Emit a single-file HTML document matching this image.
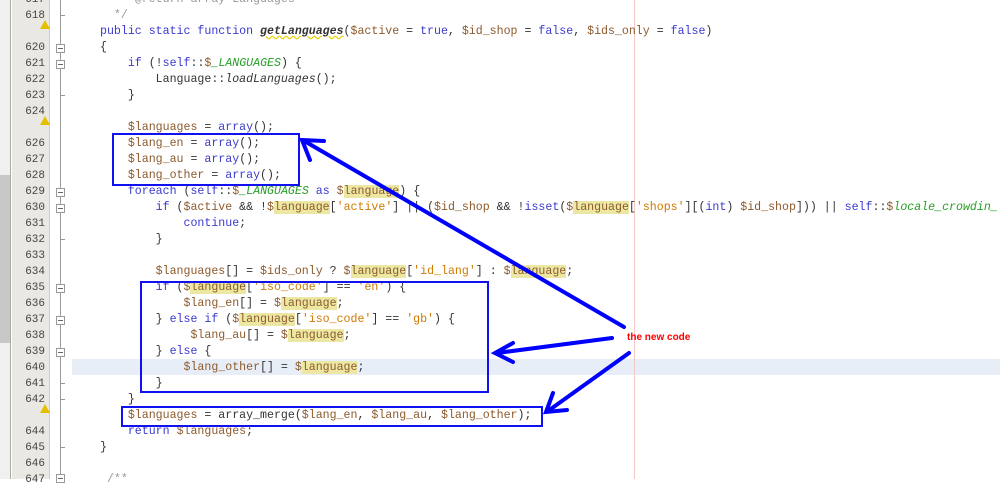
<!DOCTYPE html>
<html><head><meta charset="utf-8"><style>
*{margin:0;padding:0}
body{width:1000px;height:479px;overflow:hidden;background:#fff;position:relative;font-family:"Liberation Mono",monospace;font-size:11.6px}
.l{position:absolute;left:100px;height:16px;line-height:16px;white-space:pre;color:#333}
.n{position:absolute;left:12px;width:33px;text-align:right;height:16px;line-height:16px;color:#444;font-size:11px}
.k{color:#3a3ad0}.v{color:#8c5a2c}.s{color:#d07a00}.g{color:#27a027;font-style:italic}.c{color:#999}
.h{background:#ece8a4}
.f{position:absolute;left:56px;width:7px;height:7px;border:1px solid #999;background:#fff}
.f:after{content:"";position:absolute;left:1px;top:3px;width:5px;height:1px;background:#666}
.t{position:absolute;left:61px;width:4px;height:1px;background:#999}
.w{position:absolute;left:40px;width:0;height:0;border-left:5px solid transparent;border-right:5px solid transparent;border-bottom:9px solid #e6c000}
.box{position:absolute;border:2px solid #1010f0}
</style></head><body>
<div style="position:absolute;left:0;top:0;width:11px;height:479px;background:#f0f0f0"></div>
<div style="position:absolute;left:0;top:175px;width:10px;height:168px;background:#c8c8c8"></div>
<div style="position:absolute;left:10px;top:0;width:1px;height:479px;background:#aaa"></div>
<div style="position:absolute;left:12px;top:0;width:37px;height:479px;background:#eae8e2"></div>
<div style="position:absolute;left:49px;top:0;width:1px;height:479px;background:#ccc"></div>
<div style="position:absolute;left:60px;top:0;width:1px;height:479px;background:#999"></div>
<div style="position:absolute;left:72px;top:359px;width:928px;height:16px;background:#e8eef8"></div>
<div style="position:absolute;left:634px;top:0;width:1px;height:479px;background:#f5c8c8"></div>

<div class="n" style="top:-8px">617</div><div class="n" style="top:8px">618</div>
<div class="w" style="top:20px"></div>
<div class="n" style="top:40px">620</div><div class="n" style="top:56px">621</div><div class="n" style="top:72px">622</div><div class="n" style="top:88px">623</div><div class="n" style="top:104px">624</div>
<div class="w" style="top:116px"></div>
<div class="n" style="top:136px">626</div><div class="n" style="top:152px">627</div><div class="n" style="top:168px">628</div><div class="n" style="top:184px">629</div><div class="n" style="top:200px">630</div><div class="n" style="top:216px">631</div><div class="n" style="top:232px">632</div><div class="n" style="top:248px">633</div><div class="n" style="top:264px">634</div><div class="n" style="top:280px">635</div><div class="n" style="top:296px">636</div><div class="n" style="top:312px">637</div><div class="n" style="top:328px">638</div><div class="n" style="top:344px">639</div><div class="n" style="top:360px">640</div><div class="n" style="top:376px">641</div><div class="n" style="top:392px">642</div>
<div class="w" style="top:404px"></div>
<div class="n" style="top:424px">644</div><div class="n" style="top:440px">645</div><div class="n" style="top:456px">646</div><div class="n" style="top:472px">647</div>

<div class="f" style="top:44px"></div><div class="f" style="top:60px"></div><div class="f" style="top:188px"></div><div class="f" style="top:204px"></div><div class="f" style="top:284px"></div><div class="f" style="top:316px"></div><div class="f" style="top:348px"></div><div class="f" style="top:474px"></div>
<div class="t" style="top:15px"></div><div class="t" style="top:95px"></div><div class="t" style="top:239px"></div><div class="t" style="top:383px"></div><div class="t" style="top:399px"></div><div class="t" style="top:447px"></div>

<div class="l c" style="top:-8px">   * @return array Languages</div>
<div class="l c" style="top:8px">  */</div>
<div class="l" style="top:24px"><span class="k">public static function</span> <b><i style="text-decoration:underline wavy #e6d000">getLanguages</i></b>(<span class="v">$active</span> = <span class="k">true</span>, <span class="v">$id_shop</span> = <span class="k">false</span>, <span class="v">$ids_only</span> = <span class="k">false</span>)</div>
<div class="l" style="top:40px">{</div>
<div class="l" style="top:56px">    <span class="k">if</span> (!<span class="k">self</span>::<span class="v">$</span><span class="g">_LANGUAGES</span>) {</div>
<div class="l" style="top:72px">        Language::<i>loadLanguages</i>();</div>
<div class="l" style="top:88px">    }</div>
<div class="l" style="top:120px">    <span class="v">$languages</span> = <span class="k">array</span>();</div>
<div class="l" style="top:136px">    <span class="v">$lang_en</span> = <span class="k">array</span>();</div>
<div class="l" style="top:152px">    <span class="v">$lang_au</span> = <span class="k">array</span>();</div>
<div class="l" style="top:168px">    <span class="v">$lang_other</span> = <span class="k">array</span>();</div>
<div class="l" style="top:184px">    <span class="k">foreach</span> (<span class="k">self</span>::<span class="v">$</span><span class="g">_LANGUAGES</span> <span class="k">as</span> <span class="v">$<span class="h">language</span></span>) {</div>
<div class="l" style="top:200px">        <span class="k">if</span> (<span class="v">$active</span> &amp;&amp; !<span class="v">$<span class="h">language</span></span>[<span class="s">'active'</span>] || (<span class="v">$id_shop</span> &amp;&amp; !<span class="k">isset</span>(<span class="v">$<span class="h">language</span></span>[<span class="s">'shops'</span>][(<span class="k">int</span>) <span class="v">$id_shop</span>])) || <span class="k">self</span>::<span class="v">$</span><span class="g">locale_crowdin_lang</span></div>
<div class="l" style="top:216px">            <span class="k">continue</span>;</div>
<div class="l" style="top:232px">        }</div>
<div class="l" style="top:264px">        <span class="v">$languages</span>[] = <span class="v">$ids_only</span> ? <span class="v">$<span class="h">language</span></span>[<span class="s">'id_lang'</span>] : <span class="v">$<span class="h">language</span></span>;</div>
<div class="l" style="top:280px">        <span class="k">if</span> (<span class="v">$<span class="h">language</span></span>[<span class="s">'iso_code'</span>] == <span class="s">'en'</span>) {</div>
<div class="l" style="top:296px">            <span class="v">$lang_en</span>[] = <span class="v">$<span class="h">language</span></span>;</div>
<div class="l" style="top:312px">        } <span class="k">else if</span> (<span class="v">$<span class="h">language</span></span>[<span class="s">'iso_code'</span>] == <span class="s">'gb'</span>) {</div>
<div class="l" style="top:328px">             <span class="v">$lang_au</span>[] = <span class="v">$<span class="h">language</span></span>;</div>
<div class="l" style="top:344px">        } <span class="k">else</span> {</div>
<div class="l" style="top:360px">            <span class="v">$lang_other</span>[] = <span class="v">$<span class="h">language</span></span>;</div>
<div class="l" style="top:376px">        }</div>
<div class="l" style="top:392px">    }</div>
<div class="l" style="top:408px">    <span class="v">$languages</span> = array_merge(<span class="v">$lang_en</span>, <span class="v">$lang_au</span>, <span class="v">$lang_other</span>);</div>
<div class="l" style="top:424px">    <span class="k">return</span> <span class="v">$languages</span>;</div>
<div class="l" style="top:440px">}</div>
<div class="l c" style="top:472px"> /**</div>

<div class="box" style="left:112px;top:133px;width:184px;height:49px"></div>
<div class="box" style="left:140px;top:281px;width:345px;height:108px"></div>
<div class="box" style="left:121px;top:406px;width:418px;height:17px"></div>

<svg style="position:absolute;left:0;top:0" width="1000" height="479">
<g stroke="#0000ff" stroke-width="4" fill="none" stroke-linecap="round">
<line x1="624" y1="327" x2="306" y2="142"/>
<polyline points="310,160 302,140 324,141"/>
<line x1="612" y1="338" x2="497" y2="353"/>
<polyline points="513,343 495,353 513,362"/>
<line x1="629" y1="353" x2="548" y2="411"/>
<polyline points="553,393 546,412 567,410"/>
</g>
<text x="627" y="340" fill="#ff0000" font-family="Liberation Sans, sans-serif" font-size="10" font-weight="bold">the new code</text>
</svg>
</body></html>
